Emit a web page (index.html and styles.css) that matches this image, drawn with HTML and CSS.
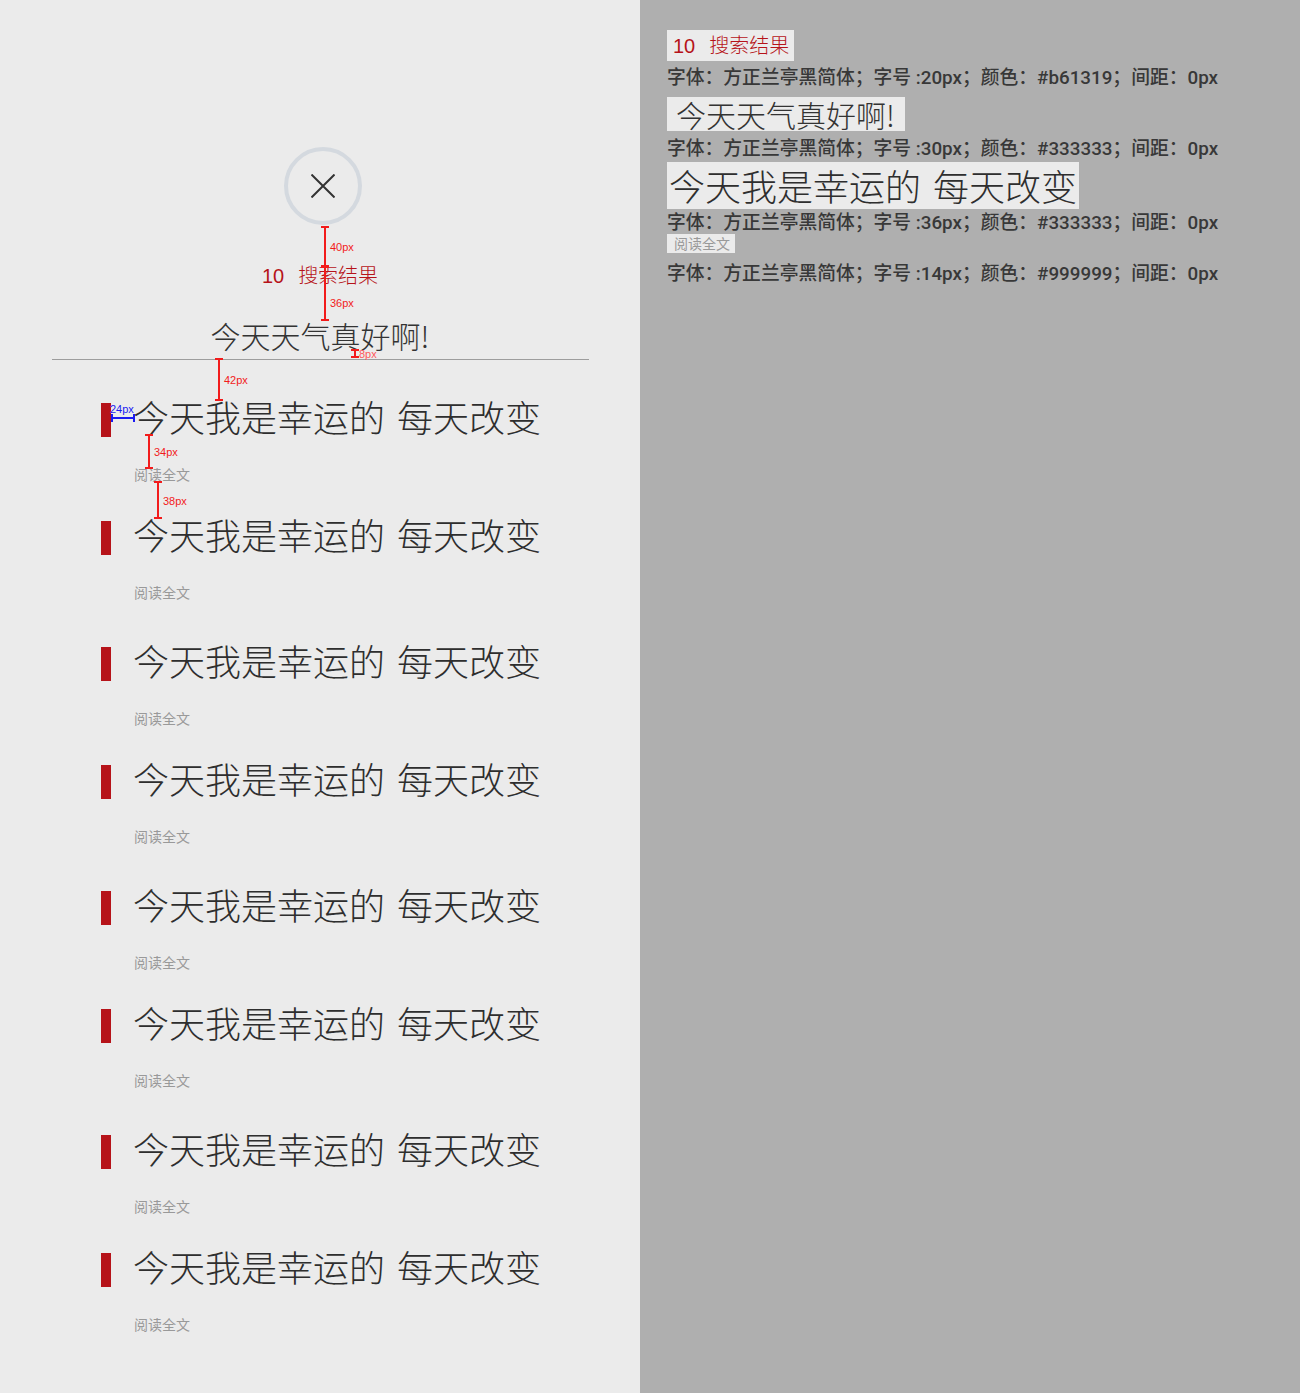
FILE: index.html
```html
<!DOCTYPE html>
<html lang="zh-CN">
<head>
<meta charset="utf-8">
<title>搜索结果</title>
<link rel="stylesheet" href="styles.css">
</head>
<body>
<div class="page">
  <section class="phone">
    <header class="search-head">
      <div class="close-btn">
        <svg width="24" height="24" viewBox="0 0 24 24"><path d="M0.5 0.5 L23.5 23.5 M23.5 0.5 L0.5 23.5" stroke="#333" stroke-width="2" fill="none"/></svg>
      </div>
      <div class="result-count"><span class="num">10</span>搜索结果</div>
      <h1 class="query">今天天气真好啊!</h1>
    </header>
    <div class="divider"></div>
    <ul class="results">
      <li class="item"><div class="item-row"><span class="bar"></span><span class="item-title">今天我是幸运的 每天改变</span></div><div class="item-more">阅读全文</div></li>
      <li class="item"><div class="item-row"><span class="bar"></span><span class="item-title">今天我是幸运的 每天改变</span></div><div class="item-more">阅读全文</div></li>
      <li class="item"><div class="item-row"><span class="bar"></span><span class="item-title">今天我是幸运的 每天改变</span></div><div class="item-more">阅读全文</div></li>
      <li class="item"><div class="item-row"><span class="bar"></span><span class="item-title">今天我是幸运的 每天改变</span></div><div class="item-more">阅读全文</div></li>
      <li class="item"><div class="item-row"><span class="bar"></span><span class="item-title">今天我是幸运的 每天改变</span></div><div class="item-more">阅读全文</div></li>
      <li class="item"><div class="item-row"><span class="bar"></span><span class="item-title">今天我是幸运的 每天改变</span></div><div class="item-more">阅读全文</div></li>
      <li class="item"><div class="item-row"><span class="bar"></span><span class="item-title">今天我是幸运的 每天改变</span></div><div class="item-more">阅读全文</div></li>
      <li class="item"><div class="item-row"><span class="bar"></span><span class="item-title">今天我是幸运的 每天改变</span></div><div class="item-more">阅读全文</div></li>
    </ul>

    <div class="dim dim-v dim-40"></div><span class="dim-label lbl-40">40px</span>
    <div class="dim dim-v dim-36"></div><span class="dim-label lbl-36">36px</span>
    <div class="dim dim-v dim-8"></div><span class="dim-label lbl-8">8px</span>
    <div class="dim dim-v dim-42"></div><span class="dim-label lbl-42">42px</span>
    <div class="dim dim-h dim-24"></div><span class="dim-label blue lbl-24">24px</span>
    <div class="dim dim-v dim-34"></div><span class="dim-label lbl-34">34px</span>
    <div class="dim dim-v dim-38"></div><span class="dim-label lbl-38">38px</span>
  </section>

  <aside class="spec">
    <div class="sample s-count"><span class="num">10</span>搜索结果</div>
    <p class="spec-line l1">字体：方正兰亭黑简体；字号 :20px；颜色：#b61319；间距：0px</p>
    <div class="sample s-query">今天天气真好啊!</div>
    <p class="spec-line l2">字体：方正兰亭黑简体；字号 :30px；颜色：#333333；间距：0px</p>
    <div class="sample s-title">今天我是幸运的 每天改变</div>
    <p class="spec-line l3">字体：方正兰亭黑简体；字号 :36px；颜色：#333333；间距：0px</p>
    <div class="sample s-more">阅读全文</div>
    <p class="spec-line l4">字体：方正兰亭黑简体；字号 :14px；颜色：#999999；间距：0px</p>
  </aside>
</div>
</body>
</html>
```

FILE: styles.css
```css
* { box-sizing: border-box; }
html, body { margin: 0; padding: 0; }
body {
  font-family: "Noto Sans CJK SC", "Noto Sans", sans-serif;
  background: #afafaf;
}
.page {
  display: flex;
  width: 1300px;
  height: 1393px;
  overflow: hidden;
}

/* ---------- left: phone mock ---------- */
.phone {
  position: relative;
  width: 640px;
  flex: none;
  background: #ebebeb;
  padding-top: 147px;
}
.search-head {
  display: flex;
  flex-direction: column;
  align-items: center;
}
.close-btn {
  width: 78px;
  height: 78px;
  border: 4px solid #d4d9df;
  border-radius: 50%;
  display: flex;
  align-items: center;
  justify-content: center;
  margin-left: 6px;
}
.close-btn svg { display: block; }
.result-count {
  margin-top: 40px;
  font-size: 20px;
  line-height: 20px;
  color: #b61319;
  font-weight: 300;
}
.num {
  font-family: "Liberation Sans", "Noto Sans CJK SC", sans-serif;
  margin-right: 14px;
}
.query {
  margin: 34px 0 0;
  font-size: 30px;
  line-height: 30px;
  font-weight: 300;
  color: #333;
}
.divider {
  margin: 9px 51px 0 52px;
  height: 1px;
  background: #9d9d9d;
}
.results {
  list-style: none;
  margin: 40px 0 0;
  padding: 0 0 0 101px;
}
.item { padding-bottom: 37px; }
.item:nth-child(even) { padding-bottom: 45px; }
.item-row {
  display: flex;
  align-items: flex-start;
  height: 36px;
}
.bar {
  width: 10px;
  height: 34px;
  margin-top: 3px;
  background: #b61319;
  flex: none;
}
.item-title {
  margin: -2px 0 0 22px;
  font-size: 36px;
  line-height: 36px;
  font-weight: 300;
  word-spacing: 4px;
  color: #2e2e2e;
  white-space: nowrap;
}
.item-more {
  margin: 31px 0 0 33px;
  font-size: 14px;
  line-height: 14px;
  color: #999;
}

/* ---------- measurement overlays ---------- */
.dim { position: absolute; }
.dim-v { width: 2px; background: #f21b1b; }
.dim-v::before, .dim-v::after {
  content: "";
  position: absolute;
  left: -3px;
  width: 8px;
  height: 2px;
  background: #f21b1b;
}
.dim-v::before { top: 0; }
.dim-v::after { bottom: 0; }
.dim-h { height: 2px; background: #1b1bf2; }
.dim-h::before, .dim-h::after {
  content: "";
  position: absolute;
  top: -3px;
  width: 2px;
  height: 8px;
  background: #1b1bf2;
}
.dim-h::before { left: 0; }
.dim-h::after { right: 0; }
.dim-label {
  position: absolute;
  font-family: "Liberation Sans", sans-serif;
  font-size: 11px;
  line-height: 12px;
  color: #f21b1b;
  white-space: nowrap;
}
.dim-label.blue { color: #1b1bf2; }

.dim-40 { left: 324px; top: 226px; height: 41px; }
.lbl-40 { left: 330px; top: 241px; }
.dim-36 { left: 324px; top: 266px; height: 55px; }
.lbl-36 { left: 330px; top: 297px; }
.dim-8 { left: 354px; top: 349px; height: 9px; }
.lbl-8 { left: 359px; top: 348px; color: #ff5a5a; }
.dim-42 { left: 218px; top: 358px; height: 43px; }
.lbl-42 { left: 224px; top: 374px; }
.dim-24 { left: 111px; top: 417px; width: 24px; }
.lbl-24 { left: 110px; top: 403px; }
.dim-34 { left: 148px; top: 434px; height: 35px; }
.lbl-34 { left: 154px; top: 446px; }
.dim-38 { left: 157px; top: 481px; height: 38px; }
.lbl-38 { left: 163px; top: 495px; }

/* ---------- right: spec sheet ---------- */
.spec {
  flex: 1;
  background: #afafaf;
  padding: 30px 0 0 27px;
  display: flex;
  flex-direction: column;
  align-items: flex-start;
}
.sample {
  background: #ebebeb;
  font-weight: 300;
  white-space: nowrap;
}
.s-count {
  height: 31px;
  padding: 5px 5px 0 6px;
  font-size: 20px;
  line-height: 20px;
  color: #b61319;
}
.s-query {
  margin-top: 9px;
  height: 34px;
  padding: 2px 10px 0 9px;
  font-size: 30px;
  line-height: 30px;
  color: #333;
}
.s-title {
  margin-top: 3px;
  height: 47px;
  padding: 5px 2px 0 2px;
  font-size: 36px;
  line-height: 36px;
  word-spacing: 4px;
  color: #2e2e2e;
}
.s-more {
  margin-top: 1px;
  height: 19px;
  padding: 2px 5px 0 7px;
  font-size: 14px;
  line-height: 14px;
  color: #999;
  font-weight: 400;
}
.spec-line {
  margin: 7px 0 0;
  font-family: "Roboto", "Noto Sans CJK SC", sans-serif;
  font-size: 18.8px;
  line-height: 20px;
  font-weight: 500;
  color: #383838;
  white-space: nowrap;
}
.spec-line.l2 { margin-top: 8px; }
.spec-line.l3 { margin-top: 4px; }
.spec-line.l4 { margin-top: 11px; }
```
